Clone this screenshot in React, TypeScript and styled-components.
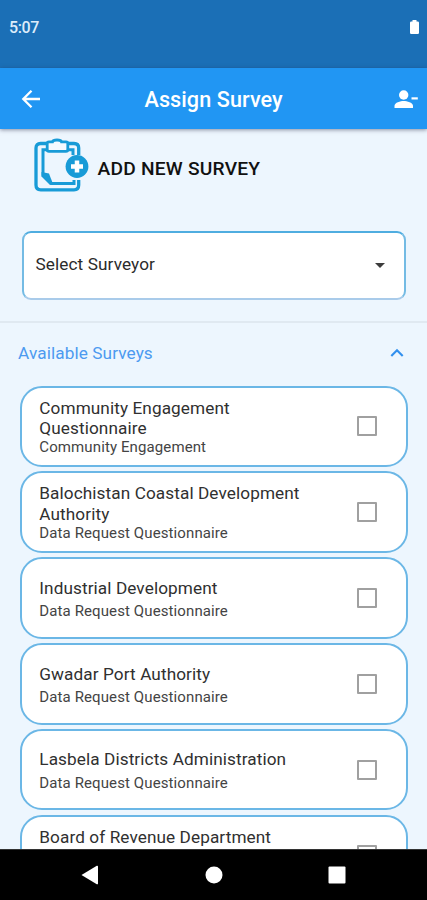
import React from 'react';
import styled, { createGlobalStyle } from 'styled-components';

const GlobalStyle = createGlobalStyle`
  * { box-sizing: border-box; }
  body { margin: 0; font-family: Roboto, sans-serif; }
`;

const Screen = styled.div`
  width: 427px;
  height: 900px;
  display: flex;
  flex-direction: column;
  overflow: hidden;
  background: #edf6fe;
  color: #2b2b2b;
`;

const StatusBar = styled.div`
  flex: none;
  height: 67.5px;
  padding: 19px 6px 0 9px;
  display: flex;
  justify-content: space-between;
  align-items: flex-start;
  background: #1b6fb6;
  color: #dcecfa;
  font-size: 16px;
  line-height: 18px;
  font-weight: 500;
  letter-spacing: -0.4px;
`;

const AppBar = styled.header`
  flex: none;
  height: 61px;
  padding: 0 7px 0 19px;
  display: grid;
  grid-template-columns: 24px 1fr 27px;
  align-items: center;
  background: #2196f3;
  color: #fff;
  box-shadow: 0 1px 4px rgba(40, 40, 70, 0.5);
  z-index: 1;

  svg { margin-top: 2px; }
`;

const Title = styled.h1`
  margin: 2px 0 0 101.5px;
  font-size: 21.6px;
  font-weight: 500;
  letter-spacing: 0.08px;
  white-space: nowrap;
`;

const AddRow = styled.section`
  flex: none;
  height: 102.5px;
  padding: 9px 0 0 33px;
  display: flex;
  align-items: flex-start;
  gap: 8.5px;
`;

const AddLabel = styled.span`
  margin-top: 19px;
  font-size: 19.2px;
  line-height: 24px;
  font-weight: 500;
  letter-spacing: 0.22px;
  color: #111;
  white-space: nowrap;
`;

const Select = styled.div`
  flex: none;
  height: 69px;
  margin: 0 21px 0 22px;
  padding: 0 18.5px 3px 11.5px;
  display: flex;
  align-items: center;
  justify-content: space-between;
  background: #fff;
  border: 2px solid #74bbe4;
  border-top-color: #4fade0;
  border-bottom-color: #a9cbea;
  border-radius: 9px;
  font-size: 17.2px;
  letter-spacing: 0.1px;

  svg { margin-top: 2px; }
`;

const Divider = styled.hr`
  flex: none;
  width: 100%;
  height: 2px;
  margin: 21px 0 0;
  border: 0;
  background: #e0e9f1;
`;

const SectionHeader = styled.div`
  flex: none;
  height: 62.7px;
  padding: 0 22px 3.2px 18px;
  display: flex;
  align-items: center;
  justify-content: space-between;
  color: #4c9af0;
  font-size: 17.2px;
  letter-spacing: 0.1px;
`;

const List = styled.div`
  flex: 1;
  min-height: 0;
  padding: 0 19px 0 20px;
  display: flex;
  flex-direction: column;
  gap: 4.3px;
  overflow: hidden;
`;

const Card = styled.div`
  flex: none;
  height: 81.5px;
  padding: 0 29px 0 17.3px;
  display: flex;
  align-items: center;
  justify-content: space-between;
  background: #fff;
  border: 2px solid #6bb7e6;
  border-radius: 22px;
`;

const CardText = styled.div<{ $tall?: boolean }>`
  width: 280px;
  min-height: ${(p) => (p.$tall ? '58.6px' : '0')};
  margin-top: ${(p) => (p.$tall ? '1px' : '2px')};
  display: flex;
  flex-direction: column;
  gap: ${(p) => (p.$tall ? '0' : '4px')};
`;

const CardTitle = styled.span`
  font-size: 17.2px;
  line-height: 20.3px;
  letter-spacing: 0.09px;
  color: #303030;
  white-space: pre-line;
`;

const CardSubtitle = styled.span`
  font-size: 15px;
  line-height: 18px;
  letter-spacing: 0.11px;
  color: #444;
`;

const Checkbox = styled.span`
  flex: none;
  width: 20px;
  height: 20px;
  border: 2px solid #a0a0a0;
  border-radius: 1px;
`;

const NavBar = styled.nav`
  flex: none;
  height: 51.5px;
  padding: 0 81px 0 81px;
  display: flex;
  align-items: center;
  justify-content: space-between;
  background: #000;
  border-top: 1px solid #333;
`;

interface Survey {
  title: string;
  subtitle?: string;
  tall?: boolean;
}

const surveys: Survey[] = [
  { title: 'Community Engagement\nQuestionnaire', subtitle: 'Community Engagement', tall: true },
  { title: 'Balochistan Coastal Development\nAuthority', subtitle: 'Data Request Questionnaire', tall: true },
  { title: 'Industrial Development', subtitle: 'Data Request Questionnaire' },
  { title: 'Gwadar Port Authority', subtitle: 'Data Request Questionnaire' },
  { title: 'Lasbela Districts Administration', subtitle: 'Data Request Questionnaire' },
  { title: 'Board of Revenue Department', tall: true },
];

const BatteryIcon = () => (
  <svg width="12" height="16" viewBox="0 0 12 16" fill="#fff">
    <path d="M3.5 1h4v1.500h1.200q1.300 0 1.300 1.300v10q0 1.200-1.200 1.200H2.200Q1 15 1 13.800V3.800q0-1.300 1.300-1.300h1.200z" />
  </svg>
);

const BackIcon = () => (
  <svg width="24" height="24" viewBox="0 0 24 24" fill="none" stroke="#fff" strokeWidth="2.300">
    <path d="M21 12H4.500M12.500 3.800 4.300 12l8.200 8.200" />
  </svg>
);

const PersonRemoveIcon = () => (
  <svg width="27" height="24" viewBox="0 0 27 24" fill="#fff">
    <circle cx="10.700" cy="8" r="4.700" />
    <path d="M1.500 21v-2.200c0-3.200 6-4.800 9.200-4.800s9.300 1.600 9.300 4.800V21z" />
    <path d="M18.500 10.300h6.300v2.200h-6.300z" />
  </svg>
);

const ClipboardIcon = () => (
  <svg width="56" height="56" viewBox="0 0 56 56" fill="none" stroke="#189bd7">
    <path strokeWidth="3.300" d="M14 5.500H7.500Q3 5.500 3 10V47q0 4.800 4.800 4.800H41q4.700 0 4.700-4.800v-5M34 5.500h7q4.700 0 4.700 4.500V17" />
    <path strokeWidth="3" d="M14 11.800H10V37l8.500 8.500h22.500V42M34 11.800h6V17" />
    <path strokeWidth="2.800" fill="#f5faff" d="M16 3.800h3.500Q20 2 24 2t4.500 1.800H33q1.800 0 1.800 1.800v5.900q0 1.800-1.800 1.800H16q-1.800 0-1.800-1.800V5.600q0-1.800 1.800-1.800z" />
    <path fill="#189bd7" stroke="none" d="M8.500 34 16 35.500 20 46l-3 1-8.500-8.500z" />
    <circle cx="44" cy="28.500" r="11.400" fill="#189bd7" stroke="none" />
    <path stroke="#fff" strokeWidth="4.500" d="M44 22.500v12M38 28.500h12" />
  </svg>
);

const DropdownIcon = () => (
  <svg width="12" height="7" viewBox="0 0 12 7" fill="#3c3c3c">
    <path d="M1 1h10L6 6z" />
  </svg>
);

const ChevronUpIcon = () => (
  <svg width="16" height="12" viewBox="0 0 16 12" fill="none" stroke="#3290ee" strokeWidth="2.100">
    <path d="M2.300 9 8 3.300 13.700 9" />
  </svg>
);

const NavBackIcon = () => (
  <svg width="18" height="20" viewBox="0 0 18 20" fill="#fff">
    <path d="M.500 10 15.800.800q1.200-.500 1.200.700v17q0 1.200-1.200.700z" />
  </svg>
);

const NavHomeIcon = () => (
  <svg width="18" height="18" viewBox="0 0 18 18" fill="#fff">
    <circle cx="9" cy="9" r="8.500" />
  </svg>
);

const NavRecentIcon = () => (
  <svg width="18" height="18" viewBox="0 0 18 18" fill="#fff">
    <rect x=".500" y=".500" width="17" height="17" rx="1" />
  </svg>
);

export default function App() {
  return (
    <>
      <GlobalStyle />
      <Screen>
        <StatusBar>
          <span>5:07</span>
          <BatteryIcon />
        </StatusBar>
        <AppBar>
          <BackIcon />
          <Title>Assign Survey</Title>
          <PersonRemoveIcon />
        </AppBar>
        <AddRow>
          <ClipboardIcon />
          <AddLabel>ADD NEW SURVEY</AddLabel>
        </AddRow>
        <Select>
          <span>Select Surveyor</span>
          <DropdownIcon />
        </Select>
        <Divider />
        <SectionHeader>
          <span>Available Surveys</span>
          <ChevronUpIcon />
        </SectionHeader>
        <List>
          {surveys.map((s) => (
            <Card key={s.title}>
              <CardText $tall={s.tall}>
                <CardTitle>{s.title}</CardTitle>
                {s.subtitle && <CardSubtitle>{s.subtitle}</CardSubtitle>}
              </CardText>
              <Checkbox />
            </Card>
          ))}
        </List>
        <NavBar>
          <NavBackIcon />
          <NavHomeIcon />
          <NavRecentIcon />
        </NavBar>
      </Screen>
    </>
  );
}
